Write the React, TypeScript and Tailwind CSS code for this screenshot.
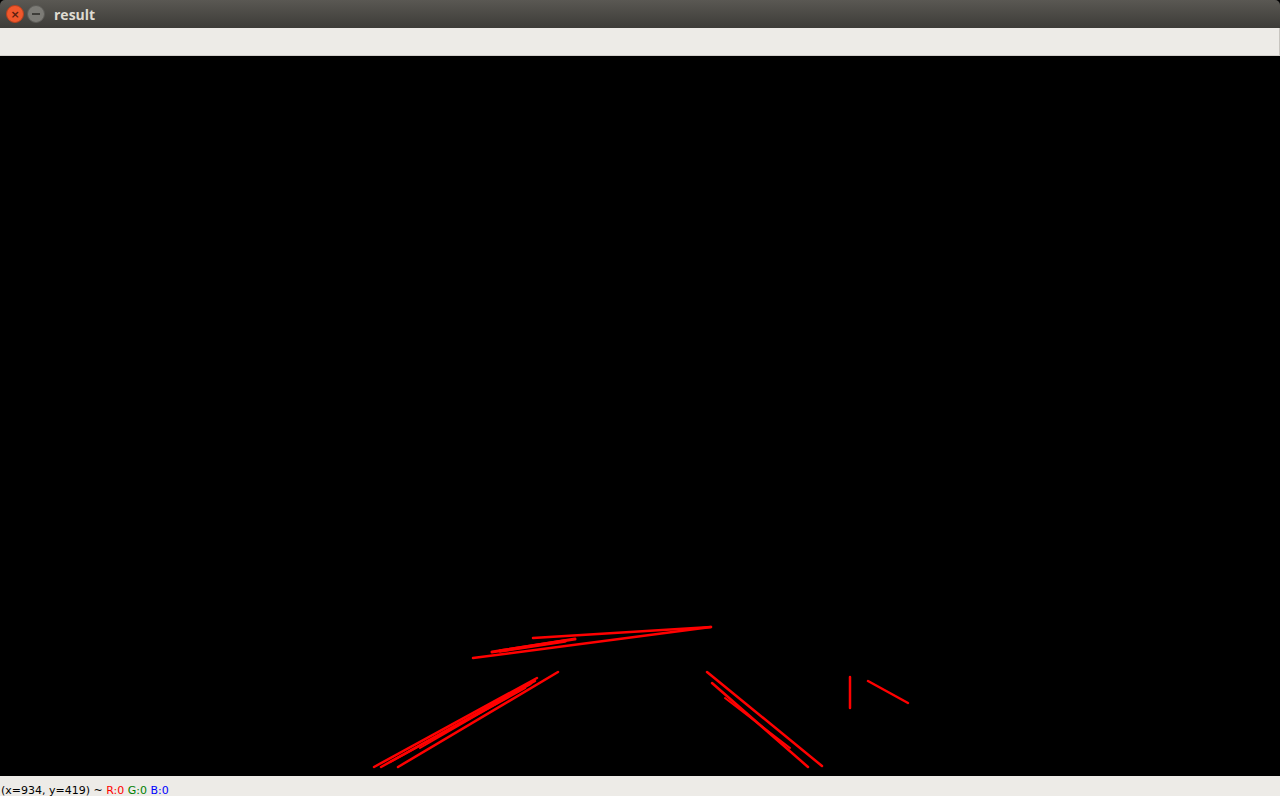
import React from "react";

const lines: [number, number, number, number, number][] = [
  // left lane
  [374, 767, 537, 678, 2.5],
  [381, 767, 535, 681, 2.5],
  [398, 767, 558, 672, 2.5],
  [390, 762, 525, 688, 2.5],
  [420, 748, 520, 690, 2],
  [480, 712, 530, 684, 3],
  // top
  [473, 658, 711, 627, 2.5],
  [533, 638, 711, 627, 2.5],
  [492, 652, 575, 639, 3],
  [500, 651, 565, 641, 3.5],
  // right lane
  [707, 672, 822, 766, 2.5],
  [712, 683, 808, 767, 2.5],
  [725, 698, 790, 748, 2],
  // right objects
  [850, 677, 850, 708, 2.5],
  [868, 681, 908, 703, 2.5],
];

export default function App() {
  return (
    <div className="w-[1280px] h-[796px] flex flex-col bg-black overflow-hidden" style={{ fontFamily: "'DejaVu Sans', sans-serif" }}>
      <div className="h-[28px] flex items-center rounded-t-[5px] bg-gradient-to-b from-[#5a5853] to-[#3d3c38] px-[6px] gap-[3px]">
        <div className="w-[18px] h-[18px] rounded-full bg-[#f0582c] border border-[#b8401e] flex items-center justify-center text-[#5a2010] text-[11px] leading-none font-bold">×</div>
        <div className="w-[18px] h-[18px] rounded-full bg-[#7c7b76] border border-[#5c5b57] flex items-center justify-center">
          <div className="w-[8px] h-[2px] bg-[#3e3d39]" />
        </div>
        <span className="ml-[6px] text-[#dfdbd2] text-[14px] font-bold" style={{ fontFamily: "'Open Sans', sans-serif" }}>result</span>
      </div>
      <div className="h-[28px] bg-[#edebe7] border-b border-[#d4d1cc] border-r border-r-[#c8c5c0]" />
      <div className="h-[720px] bg-black">
        <svg width="1280" height="720" viewBox="0 56 1280 720">
          {lines.map(([x1, y1, x2, y2, w], i) => (
            <line key={i} x1={x1} y1={y1} x2={x2} y2={y2} stroke="#ff0000" strokeWidth={w} strokeLinecap="round" />
          ))}
        </svg>
      </div>
      <div className="h-[20px] bg-[#edebe7] flex items-end pl-[1px] text-[11px] leading-[16px] text-black overflow-hidden" style={{ fontFamily: "'DejaVu Sans', sans-serif" }}>
        <span className="translate-y-[3px] whitespace-pre">
          (x=934, y=419) ~ <span className="text-[#ff0000]">R:0</span> <span className="text-[#008000]">G:0</span> <span className="text-[#0000ff]">B:0</span>
        </span>
      </div>
    </div>
  );
}
